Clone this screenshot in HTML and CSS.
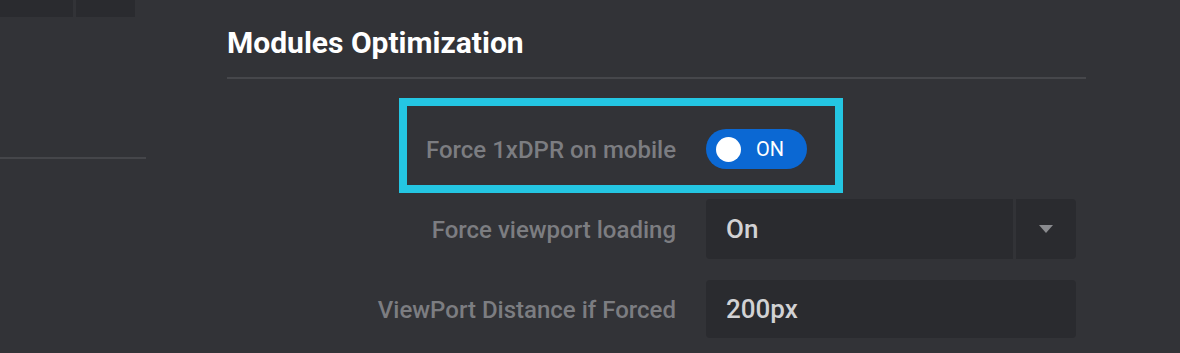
FILE: index.html
```html
<!DOCTYPE html>
<html>
<head>
<meta charset="utf-8">
<link rel="stylesheet" href="styles.css">
</head>
<body>
<div class="page">
  <aside class="sidebar">
    <div class="tabs">
      <div class="tab tab-a"></div>
      <div class="tab tab-b"></div>
    </div>
    <div class="side-line"></div>
  </aside>
  <main class="main">
    <h2 class="title">Modules Optimization</h2>
    <div class="rule"></div>
    <div class="rows">
      <div class="row">
        <label class="label">Force 1xDPR on mobile</label>
        <div class="control">
          <div class="toggle"><span class="knob"></span><span class="toggle-text">ON</span></div>
        </div>
        <div class="highlight"></div>
      </div>
      <div class="row">
        <label class="label">Force viewport loading</label>
        <div class="control select">
          <div class="select-value">On</div>
          <div class="select-arrow"><svg width="16" height="10" viewBox="0 0 16 10"><path d="M1 1 L15 1 L8 9 Z" fill="#8a8b8f"/></svg></div>
        </div>
      </div>
      <div class="row">
        <label class="label">ViewPort Distance if Forced</label>
        <div class="control input">200px</div>
      </div>
    </div>
  </main>
</div>
</body>
</html>
```

FILE: styles.css
```css
html, body {
  margin: 0;
  padding: 0;
  background: #323337;
  font-family: Roboto, "Liberation Sans", sans-serif;
}
.page {
  display: grid;
  grid-template-columns: 146px 859px;
  column-gap: 81px;
  height: 353px;
  overflow: hidden;
}
.sidebar {
  display: flex;
  flex-direction: column;
}
.tabs {
  display: flex;
  gap: 3px;
  height: 17px;
}
.tab {
  background: #2a2b2f;
  height: 17px;
}
.tab-a { width: 73px; }
.tab-b { width: 59px; }
.side-line {
  margin-top: 140px;
  height: 2px;
  background: #45464a;
}
.main {
  display: flex;
  flex-direction: column;
}
.title {
  margin: 27px 0 0 0;
  font-size: 30px;
  line-height: 32px;
  font-weight: 700;
  color: #ffffff;
}
.rule {
  margin-top: 18px;
  height: 2px;
  background: #46474b;
}
.rows {
  display: flex;
  flex-direction: column;
  gap: 20px;
  margin-top: 40px;
}
.row {
  position: relative;
  display: grid;
  grid-template-columns: 449px 370px;
  column-gap: 30px;
  align-items: center;
  height: 60px;
}
.label {
  text-align: right;
  font-size: 24px;
  font-weight: 500;
  color: #7c7d81;
  padding-top: 2px;
}
.control {
  display: flex;
  align-items: center;
}
.toggle {
  width: 101px;
  height: 40px;
  border-radius: 20px;
  background: #0b68d3;
  display: flex;
  align-items: center;
  box-sizing: border-box;
  padding-left: 10px;
}
.knob {
  width: 25px;
  height: 25px;
  border-radius: 50%;
  background: #ffffff;
}
.toggle-text {
  margin-left: 15px;
  color: #ffffff;
  font-size: 20px;
}
.highlight {
  position: absolute;
  left: 172px;
  top: -21px;
  width: 444px;
  height: 95px;
  box-sizing: border-box;
  border: 8px solid #24c6e2;
}
.select {
  height: 60px;
  gap: 3px;
  align-items: stretch;
}
.select-value {
  flex: 1;
  background: #2a2b2f;
  border-radius: 4px 0 0 4px;
  display: flex;
  align-items: center;
  padding-left: 20px;
  font-size: 26px;
  font-weight: 500;
  color: #d2d2d4;
}
.select-arrow {
  width: 60px;
  background: #2a2b2f;
  border-radius: 0 4px 4px 0;
  display: flex;
  align-items: center;
  justify-content: center;
}
.input {
  height: 58px;
  background: #2a2b2f;
  border-radius: 4px;
  padding-left: 20px;
  font-size: 26px;
  font-weight: 500;
  color: #d2d2d4;
}
```
